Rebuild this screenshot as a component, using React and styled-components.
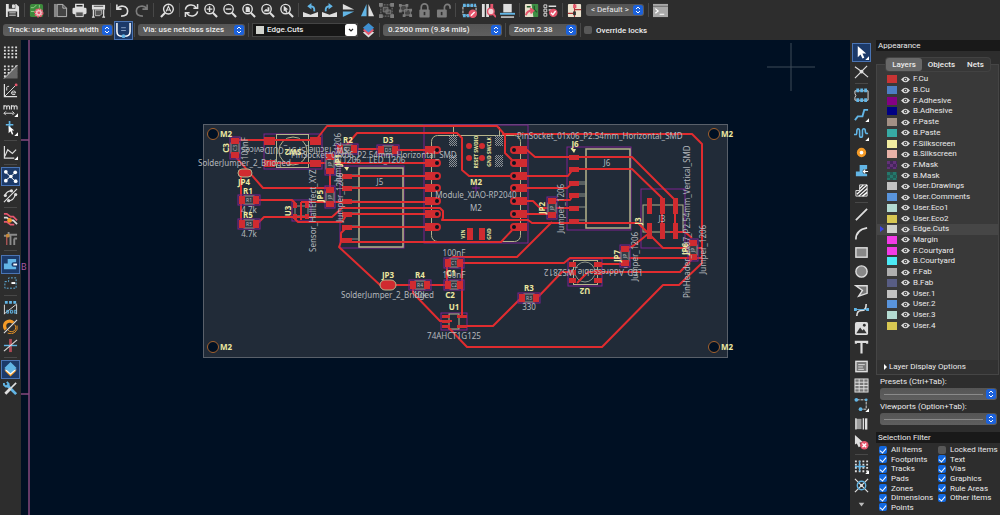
import React, { useState } from 'react';
import styled, { createGlobalStyle, css } from 'styled-components';

const GlobalStyle = createGlobalStyle`
  * {
    box-sizing: border-box;
  }
  body {
    margin: 0;
    background: #2d2d2d;
    color: #ebebeb;
    font: 8px/10px Roboto, 'Liberation Sans', sans-serif;
  }
  button, select, input {
    font: inherit;
    color: inherit;
    margin: 0;
  }
`;

const Window = styled.div`
  display: flex;
  flex-direction: column;
  min-height: 100vh;
`;

const TopBar = styled.header`
  display: flex;
  align-items: center;
  gap: 4px;
  height: 20px;
  padding-left: 5px;
`;

const OptionsBar = styled.div`
  display: flex;
  align-items: center;
  gap: 3px;
  height: 20px;
  padding-left: 3px;
  font-weight: 500;
`;

const Body = styled.div`
  flex: 1;
  display: flex;
`;

const SideBar = styled.nav`
  flex: none;
  display: flex;
  flex-direction: column;
  align-items: center;
  gap: 4px;
  width: ${(p) => (p.$wide ? 23 : 21)}px;
  padding-top: 5px;
`;

const Separator = styled.span`
  flex: none;
  background: #484848;
  ${(p) =>
    p.$row
      ? css`
          width: 13px;
          height: 1px;
          margin-bottom: ${p.$wide ? 2 : 0}px;
        `
      : css`
          width: 1px;
          height: 14px;
          margin-right: ${p.$wide ? 2 : 0}px;
        `}
`;

const ToolButton = styled.button`
  flex: none;
  display: flex;
  width: 15px;
  height: 15px;
  padding: 0;
  border: none;
  background: none;
  opacity: ${(p) => (p.disabled ? 0.45 : 1)};
  ${(p) =>
    p.$active &&
    css`
      background: #1c3a69;
      box-shadow: 0 0 0 1px #1c3a69, 0 0 0 2px #4a74b4;
    `}
  svg {
    width: 15px;
    height: 15px;
  }
`;

const Canvas = styled.main`
  flex: 1;
  min-width: 0;
  background: #001023;
  svg {
    display: block;
    width: 100%;
    height: 100%;
  }
`;

const Panel = styled.aside`
  flex: none;
  display: flex;
  flex-direction: column;
  width: 127px;
  padding-left: 3px;
`;

const PanelTitle = styled.h2`
  margin: ${(p) => (p.$spaced ? 7 : 0)}px 0 0;
  padding: 0 2px;
  background: #191919;
  font-size: 8px;
  font-weight: 400;
  line-height: 11px;
`;

const Tabs = styled.div`
  display: flex;
  align-self: center;
  margin: 7px 0 -7px;
  border-radius: 3px;
  background: #373737;
  box-shadow: 0 0 0 1px #424242;
  z-index: 1;
`;

const Tab = styled.button`
  height: 13px;
  padding: 0 6px;
  border: none;
  border-radius: 3px;
  background: ${(p) => (p.$active ? '#686868' : 'none')};
  font-weight: 500;
  line-height: 13px;
`;

const LayerBox = styled.section`
  display: flex;
  flex-direction: column;
  height: 311px;
  margin-right: 1px;
  border: 1px solid #454545;
  background: #393939;
`;

const LayerList = styled.ul`
  display: grid;
  grid-auto-rows: 1fr;
  height: 257px;
  margin: 9px 0 auto;
  padding: 0;
  list-style: none;
`;

const LayerRow = styled.li`
  display: grid;
  grid-template-columns: 10px 13px 11px 1fr;
  align-items: center;
  background: ${(p) => (p.$current ? '#464646' : 'none')};
`;

const Marker = styled.span`
  justify-self: center;
  border: 3px solid transparent;
  border-left: 4px solid ${(p) => (p.$on ? '#3c45e8' : 'transparent')};
  border-right: none;
`;

const Swatch = styled.span`
  width: ${(p) => (p.$small ? 8 : 10)}px;
  height: 8px;
  background: ${(p) => p.$color};
  ${(p) =>
    p.$checker &&
    css`
      background: repeating-conic-gradient(${p.$checker} 0 25%, ${p.$color} 0 50%) 0 0 / 6px 6px;
    `}
`;

const EyeButton = styled.button`
  display: flex;
  width: 9px;
  padding: 0;
  margin-left: 1px;
  border: none;
  background: none;
`;

const LayerName = styled.span`
  padding-left: 2px;
  line-height: 10px;
`;

const Disclosure = styled.button`
  display: flex;
  align-items: center;
  gap: 2px;
  height: 14px;
  padding: 0 7px;
  border: none;
  background: #323232;
  &::before {
    content: '';
    border: 3px solid transparent;
    border-left: 3px solid #fff;
    border-right: none;
  }
`;

const Field = styled.div`
  display: flex;
  flex-direction: column;
  gap: 1px;
  margin-top: 2px;
  padding: 0 3px 0 4px;
`;

const SelectBox = styled.span`
  flex: none;
  display: grid;
  align-items: center;
  width: ${(p) => (p.$width ? `${p.$width}px` : 'auto')};
  height: 12px;
  border-radius: 3px;
  background: linear-gradient(#555, #5f5f5f);
  & > * {
    grid-area: 1 / 1;
  }
  svg {
    justify-self: end;
    margin-right: 1px;
    width: 10px;
    height: 10px;
    pointer-events: none;
  }
`;

const Select = styled.select`
  appearance: none;
  width: 100%;
  height: 12px;
  padding: 0 12px 0 5px;
  border: none;
  background: none;
  line-height: 12px;
`;

const Rule = styled.span`
  height: 1px;
  margin: 0 14px 0 4px;
  background: #8a8a8a;
`;

const LayerSelect = styled.span`
  display: flex;
  align-items: center;
  width: 106px;
  height: 14px;
  padding-left: 3px;
  border: 1px solid #444;
  background: #161616;
  ${Select} {
    flex: 1;
    min-width: 0;
    padding: 0 3px;
  }
  svg {
    flex: none;
    width: 12px;
    height: 12px;
  }
`;

const FilterGrid = styled.div`
  display: grid;
  grid-template-columns: 59px 1fr;
  grid-template-rows: repeat(7, 1fr);
  grid-auto-flow: column;
  height: 67px;
  margin-top: 2px;
  padding-left: 3px;
`;

const CheckLabel = styled.label`
  display: flex;
  align-items: center;
  gap: 4px;
  line-height: 9px;
  white-space: nowrap;
`;

const Check = styled.input`
  appearance: none;
  flex: none;
  width: 8px;
  height: 8px;
  border-radius: 2px;
  background: #585858;
  &:checked {
    background: #1268e0;
  }
  &:checked::after {
    content: '';
    display: block;
    width: 3px;
    height: 5px;
    margin: 1px auto;
    border: solid #fff;
    border-width: 0 1px 1px 0;
    transform: rotate(40deg);
  }
`;

const W = '#dedede';
const B = '#62b5e5';
const R = '#e5566d';

const glass = (
  <>
    <circle cx="7" cy="6.5" r="5" fill="none" stroke={W} strokeWidth="1.5" />
    <path d="M10.5 10.5L15 15" stroke={W} strokeWidth="2.2" />
  </>
);

const corner = <path d="M16 12v4h-4z" fill="#fff" />;

const dots = (
  <path
    d="M1 2.5h14M1 6h14M1 9.5h14M1 13h14"
    stroke={W}
    strokeWidth="2"
    strokeDasharray="2 2"
  />
);

const glyphs = {
  save: (
    <>
      <path d="M1 1h11l3 3v11H1z" fill={W} />
      <path d="M4 1h7v5H4zM3 9h10v6H3z" fill="#333" />
      <path d="M8 2h2v3H8zM4.500 10.500h7M4.500 13h7" fill={W} stroke={W} />
    </>
  ),
  boardSetup: (
    <>
      <rect x="1" y="1" width="14" height="14" rx="2" fill="#3c8a3c" />
      <path d="M2 5h3l3-3M2 9h4M11 2v3" stroke="#9ad08a" fill="none" />
      <circle cx="10.500" cy="10.500" r="4" fill="#f2c4c8" stroke={R} strokeDasharray="2 1" strokeWidth="2" />
      <circle cx="10.500" cy="10.500" r="1.500" fill={R} />
    </>
  ),
  page: (
    <>
      <path d="M1 1h3v14H1z" fill="#888" />
      <path d="M4.500 1.500h6l4 4v9h-10z" fill="#444" stroke="#bbb" />
      <path d="M10.500 1.500v4h4" fill="none" stroke="#bbb" />
    </>
  ),
  print: (
    <>
      <path d="M4 1.500h8v3H4z" fill="none" stroke={W} strokeWidth="1.500" />
      <rect x="0.500" y="5" width="15" height="7" rx="1.500" fill={W} />
      <path d="M4 9.500h8v5H4z" fill="#555" stroke={W} />
    </>
  ),
  plot: (
    <>
      <path d="M1 2h14v5H1z" fill={W} />
      <path d="M3 3.500h10" stroke="#444" />
      <path d="M2.500 7v8M13.500 7v8M1 15h3M12 15h3" stroke={W} strokeWidth="1.300" />
      <path d="M4.500 7.500h7v4l-2 2h-5z" fill="#555" stroke="#bbb" />
    </>
  ),
  undo: <path d="M2 1.500v5h5M2.500 6C5 2 13 2.500 13.500 8.500c0 4-3.500 5.500-7 5.500" fill="none" stroke={W} strokeWidth="1.700" />,
  redo: <path d="M14 1.500v5H9M13.500 6C11 2 3 2.500 2.500 8.500c0 4 3.500 5.500 7 5.500" fill="none" stroke={W} strokeWidth="1.700" />,
  find: (
    <>
      <circle cx="9" cy="6.500" r="5.200" fill="none" stroke={W} strokeWidth="1.500" />
      <path d="M5.500 10.500L1 15" stroke={W} strokeWidth="2.200" />
      <path d="M6.500 9L9 3.500L11.500 9M7.500 7.500h3" fill="none" stroke={W} strokeWidth="1.200" />
    </>
  ),
  refresh: (
    <path
      d="M1.500 7C2.500 1.500 10 .5 13 5M14.500 1v4.500H10M14.500 9C13.500 14.500 6 15.500 3 11M1.500 15v-4.500H6"
      fill="none"
      stroke={W}
      strokeWidth="1.600"
    />
  ),
  zoomIn: <>{glass}<path d="M4 6.500h6M7 3.500v6" stroke={W} strokeWidth="1.500" /></>,
  zoomOut: <>{glass}<path d="M4 6.500h6" stroke={W} strokeWidth="1.500" /></>,
  zoomFit: <>{glass}<path d="M5 4h3l1.500 1.500V9.500H5z" fill={W} /></>,
  zoomObjects: <>{glass}<path d="M3.500 9l3-3l1.500 1.500V4.500h2V9z" fill={W} /></>,
  zoomSelection: <>{glass}<path d="M5 3l5 4H8l1 3l-1.500.500L6.500 8L5 9z" fill={W} /></>,
  rotateLeft: (
    <>
      <path d="M0 9.500l8 3l8-3V15H0z" fill={W} />
      <path d="M12 9C12.500 5 11 3.500 8 3.500" fill="none" stroke={B} strokeWidth="2" />
      <path d="M9 0v7L4.500 3.500z" fill={B} />
    </>
  ),
  rotateRight: (
    <>
      <path d="M0 9.500l8 3l8-3V15H0z" fill={W} />
      <path d="M4 9C3.500 5 5 3.500 8 3.500" fill="none" stroke={B} strokeWidth="2" />
      <path d="M7 0v7L11.500 3.500z" fill={B} />
    </>
  ),
  flipV: (
    <>
      <path d="M2 1v6h12z" fill={W} />
      <path d="M2 15V9h12z" fill={B} />
    </>
  ),
  flipH: (
    <>
      <path d="M1 14h6V1z" fill={B} />
      <path d="M15 14H9V1z" fill={W} />
    </>
  ),
  group: (
    <>
      <rect x="2" y="2" width="12" height="12" fill="none" stroke={W} strokeDasharray="2 1" />
      <path d="M0 0h4v4H0zM12 0h4v4h-4zM0 12h4v4H0zM12 12h4v4h-4z" fill={W} />
      <path d="M4.500 4.500h5v5h-5zM7.500 7.500h5v4h-5z" fill="#777" stroke={W} />
    </>
  ),
  ungroup: (
    <>
      <path d="M2.500 2.500h7v6h-7zM7 7h6.500v6H7z" fill="#666" stroke={W} />
      <path d="M1 1h3v3H1zM8 1h3v3H8zM1 7h3v3H1zM12 6h3v3h-3zM12 12h3v3h-3zM5 12h3v3H5z" fill={W} />
    </>
  ),
  lock: (
    <>
      <path d="M4.500 8V4.500a3.500 3.500 0 0 1 7 0V8" fill="none" stroke={W} strokeWidth="1.800" />
      <rect x="2.500" y="7" width="11" height="8.500" rx="1" fill={W} />
      <path d="M8 9.500v3.500" stroke="#333" strokeWidth="1.800" />
    </>
  ),
  unlock: (
    <>
      <path d="M9 8V4.500a3 3 0 0 1 6 0V6" fill="none" stroke={W} strokeWidth="1.800" />
      <rect x="1" y="7" width="10.500" height="8.500" rx="1" fill={W} />
      <path d="M6 9.500v3.500" stroke="#333" strokeWidth="1.800" />
    </>
  ),
  footprintEditor: (
    <>
      <rect x="1" y="3" width="14" height="10" fill="none" stroke={W} strokeDasharray="3 1" />
      <path d="M1 2.500h14M1 13.500h8" stroke={B} strokeWidth="3.500" strokeDasharray="3 1" />
      <circle cx="11.500" cy="11.500" r="4.500" fill={R} />
      <path d="M9.500 13.500l4-4" stroke="#fff" strokeWidth="1.500" />
    </>
  ),
  footprintBrowser: (
    <>
      <path d="M1 1h3v14H1zM5.500 1h3v14h-3z" fill={W} />
      <path d="M10 1h3v5h-3z" fill={R} />
      <circle cx="10.500" cy="9" r="3.500" fill="#f4d6da" stroke={R} strokeWidth="1.500" />
      <path d="M13 11.500l3 3.500" stroke={R} strokeWidth="2" />
    </>
  ),
  updateFromLibrary: (
    <>
      <path d="M3.500 1h9v9h-9z" fill={W} />
      <path d="M0 11.500h16" stroke={B} strokeWidth="2" />
      <path d="M1 15h14" stroke={W} strokeWidth="1.500" />
    </>
  ),
  updateBoard: (
    <>
      <rect x="1" y="1" width="14" height="14" rx="1" fill="#e8e0cc" />
      <path d="M8 1h7v14h-5z" fill="#3f8f45" />
      <path d="M3 4h4M11 3v4l3 3" stroke="#235c2a" fill="none" strokeWidth="1.500" />
      <path d="M2 13c1-4 3-5 7-5M6.500 5.500L10 8l-3 3" stroke={R} fill="none" strokeWidth="2" />
    </>
  ),
  drc: (
    <>
      <path d="M1 2h3v3H1zM1 6.500h3v3H1zM1 11h3v3H1z" fill="none" stroke={W} />
      <path d="M6 3.500h8M6 7.500h4" stroke={W} strokeWidth="1.500" />
      <circle cx="11" cy="10.500" r="4.500" fill={R} />
      <path d="M8.500 10.500l2 2l3-4" fill="none" stroke="#fff" strokeWidth="1.500" />
    </>
  ),
  schematic: (
    <>
      <rect x="1" y="1" width="14" height="14" rx="1" fill="#ece3cf" />
      <path d="M8 1v14M1 11h7M8 7h7" fill="none" stroke="#a33" strokeWidth="1.200" />
      <path d="M6.500 1.500h3.500v4H6.500z" fill={R} />
      <path d="M6.500 9h3v4h-3z" fill="#333" />
    </>
  ),
  terminal: (
    <>
      <rect x="0" y="1" width="16" height="14" fill="#a9a9a9" />
      <path d="M0 3.500h16" stroke="#666" />
      <path d="M2.500 6l3 2.500l-3 2.500M7 12h5" fill="none" stroke="#fff" strokeWidth="1.300" />
    </>
  ),
  trackAuto: (
    <>
      <path d="M1 0v9q0 5 5 5h4q5 0 5-5V0" fill="none" stroke="#fff" strokeWidth="1.600" />
      <path d="M5.500 5h5M5.500 8h5" stroke="#8aa3c8" />
      <circle cx="8" cy="14" r="2" fill={B} />
    </>
  ),
  layerPair: (
    <>
      <path d="M2 10l6 5.500L14 10L8 7z" fill={W} />
      <path d="M2 7.500L8 13l6-5.500L8 4z" fill={R} />
      <path d="M2 5l6 5l6-5l-6-5z" fill="#3f8fd0" />
    </>
  ),
  grid: dots,
  gridOverride: (
    <>
      {dots}
      <path d="M15.500 1v14.500H1z" fill="#686868" />
      <path d="M15.500 1L1 15.500" stroke={W} />
    </>
  ),
  polar: (
    <>
      <path d="M1.500 1v13.500H15" fill="none" stroke={W} strokeWidth="1.300" />
      <path d="M2 14L14 2" stroke={W} />
      <circle cx="14" cy="2" r="1.500" fill={R} />
      <path d="M4 8V4.500q0-1 2.500-1M9 10.500h4.500q0-2-2.200-2t-2.300 2.300t4 1.500" fill="none" stroke={W} />
    </>
  ),
  units: (
    <>
      <path d="M1 8V3.500M1 5q2-2 3 0v3M4 5q2-2 3 0v3M9 8V3.500M9 5q2-2 3 0v3M12 5q2-2 3 0v3" fill="none" stroke={W} strokeWidth="1.200" />
      <path d="M1 12h10M3 10l-2 2l2 2M10 10l2 2l-2 2" fill="none" stroke={W} />
      {corner}
    </>
  ),
  cursorShape: (
    <>
      <path d="M7 0v8M3 4h8" stroke={B} strokeWidth="1.800" />
      <path d="M6 5l6 5H9.500l1.500 4l-1.500.500L8 11l-2 2z" fill="#fff" />
      {corner}
    </>
  ),
  angle: (
    <>
      <path d="M1.500 1v13H12" fill="none" stroke={W} strokeWidth="1.300" />
      <path d="M2 12l3-7l5 4l4-4" fill="none" stroke={W} strokeWidth="1.200" />
      {corner}
    </>
  ),
  ratsnest: (
    <>
      <path d="M2.500 3L13 13M2.500 12.500L8 8l5-4" stroke="#fff" />
      <circle cx="3" cy="3" r="2" fill="#fff" />
      <circle cx="13" cy="3.500" r="2" fill="#fff" />
      <circle cx="3" cy="12.500" r="2" fill="#fff" />
      <circle cx="8.500" cy="8" r="1.800" fill="#fff" />
      <circle cx="13.500" cy="13" r="2" fill="#fff" />
    </>
  ),
  curvedRatsnest: (
    <>
      <path d="M2 8q2-5 7-5M5 14q7-1 8-7M1 15L15 1" fill="none" stroke={W} strokeWidth="1.200" />
      <circle cx="2.500" cy="8" r="1.700" fill={W} />
      <circle cx="9" cy="3" r="1.700" fill={W} />
      <circle cx="13.500" cy="7" r="1.700" fill={W} />
      <circle cx="6" cy="13.500" r="1.700" fill={W} />
    </>
  ),
  highContrast: (
    <>
      <path d="M1 2h3l4 3h3l4 4" fill="none" stroke={R} strokeWidth="1.800" />
      <path d="M1 6h3l4 3h3l4 4" fill="none" stroke={W} strokeWidth="1.800" />
      <path d="M1 10.500h3l4 3h4" fill="none" stroke={R} strokeWidth="1.800" />
      <circle cx="7" cy="9" r="2.500" fill="#f39a27" />
    </>
  ),
  netColors: (
    <>
      <path d="M1 5h7v10M6 1v3h9M12 8v7M15 8h-3" fill="none" stroke="#8b8b8b" strokeWidth="2" />
      <path d="M4 5v10" stroke="#a55" strokeWidth="1.500" />
      <circle cx="5" cy="5" r="2" fill="#c58a3a" />
    </>
  ),
  zoneFill: (
    <>
      <path d="M5 2h9v3.500a3 3 0 0 0 0 5V13H1V7h4z" fill={B} />
      <path d="M16 5.500h-4.500a2 2 0 0 0 0 5H16z" fill="#1c3a69" />
      <path d="M11 8h4" stroke="#fff" strokeWidth="2" />
    </>
  ),
  zoneOutline: (
    <>
      <path d="M2 6h4V2h8v11H2z" fill="none" stroke={B} strokeDasharray="2 1.500" />
      <path d="M9 7.500h4" stroke="#fff" strokeWidth="2" />
    </>
  ),
  padOutline: (
    <>
      <path d="M2 2.500h13" stroke={B} strokeWidth="3" strokeDasharray="3 1.500" />
      <path d="M1.500 5v10M14.500 5v10M1 15L15 4" stroke={W} />
      <path d="M4 11h2v3H4zM8 11h2v3H8zM12 11h2v3h-2z" fill="none" stroke={B} />
    </>
  ),
  viaOutline: (
    <>
      <path d="M3 11a5 5 0 0 1 8-7" fill="none" stroke="#f39a27" strokeWidth="3.500" />
      <path d="M5.500 12a4.500 4.500 0 0 0 7-6M5 15a7 7 0 0 0 10-8" fill="none" stroke="#f39a27" />
      <path d="M1 15L15 1" stroke={W} strokeWidth="1.200" />
    </>
  ),
  trackOutline: (
    <>
      <path d="M8 1v14" stroke="#b04a55" strokeWidth="3" />
      <path d="M1 8h14" stroke={B} strokeWidth="1.500" />
      <path d="M1 14L15 2" stroke={W} strokeWidth="1.200" />
    </>
  ),
  layers: (
    <>
      <path d="M1.500 9L8 15.500L14.500 9z" fill="#f39a27" />
      <path d="M1.500 8L8 13.500L14.500 8z" fill="#fff" />
      <path d="M1.500 6.500L8 12l6.500-5.500L8 0z" fill={B} />
    </>
  ),
  properties: (
    <>
      <path d="M4 4l10 10" stroke={B} strokeWidth="3" />
      <path d="M1 2v2l2 2h2l1-1V3L4 1" fill="none" stroke={B} strokeWidth="2" />
      <path d="M14 2L8 8" stroke={W} strokeWidth="1.800" />
      <path d="M8 8l-5.500 5.500" stroke={W} strokeWidth="3" />
    </>
  ),
  select: <><path d="M4 1l9 8H9l2 4.500l-2 1L7 10l-3 3z" fill="#fff" />{corner}</>,
  localRatsnest: (
    <>
      <path d="M1 3l7 5l6-6M1 15l7-7l7 6" fill="none" stroke={W} strokeWidth="1.200" />
      <circle cx="8" cy="8" r="2" fill={W} />
    </>
  ),
  footprint: (
    <>
      <path d="M1 3h14v10H1v-3q2-2 0-4z" fill="none" stroke={W} />
      <path d="M2.500 2.500h11.500M2.500 13h11.500" stroke={B} strokeWidth="4" strokeDasharray="3 1.200" />
    </>
  ),
  route: <><path d="M1 14l3-4h5l2-7h4" fill="none" stroke={B} strokeWidth="2" />{corner}</>,
  tune: (
    <>
      <path d="M0 9h2q1 0 1-3t1.500-3T6 6v4q0 2 1.500 2T9 10V5q0-2 1.500-2T12 5t1 3h2" fill="none" stroke={B} strokeWidth="1.700" />
      {corner}
    </>
  ),
  via: <circle cx="8" cy="8" r="3.500" fill="#fff" stroke="#f39a27" strokeWidth="3" />,
  zone: (
    <>
      <path d="M6 1h8v4.500a3 3 0 0 0 0 5V13H2V8h4z" fill={B} />
      <path d="M16 5.500h-4.500a2 2 0 0 0 0 5H16z" fill="#2d2d2d" />
      <path d="M10 8h5M12 6l-2 2l2 2" fill="none" stroke="#fff" strokeWidth="1.300" />
    </>
  ),
  ruleArea: (
    <>
      <path d="M6 2h8v12H2V8h4z" fill="#3a3a3a" stroke={W} />
      <path d="M6 6l4-4M3 12L14 2M5 14l9-8M9 14l5-4" stroke="#fff" strokeWidth="1.400" />
    </>
  ),
  line: <path d="M2 14L14 2" stroke={W} strokeWidth="1.800" />,
  arc: <path d="M2 14.500Q2 4 14 2" fill="none" stroke={W} strokeWidth="1.800" />,
  rect: <rect x="2" y="3" width="12" height="10" fill="#888" stroke={W} strokeWidth="1.500" />,
  circle: <circle cx="8" cy="8" r="6" fill="#888" stroke={W} strokeWidth="1.500" />,
  polygon: <path d="M2 3h12v8l-9 3l4-6z" fill="#777" stroke={W} strokeWidth="1.500" />,
  bezier: (
    <>
      <path d="M3 15q0-6 5-6t5-7" fill="none" stroke={W} strokeWidth="1.700" />
      <path d="M1 8h14" stroke={B} />
      <path d="M0 6.500h3v3H0zM13 6.500h3v3h-3z" fill={B} />
    </>
  ),
  image: (
    <>
      <rect x="1" y="1" width="14" height="14" rx="2" fill={W} />
      <path d="M2.500 13l4-6l2.500 3l1.500-1.500L13.500 13z" fill="#333" />
      <circle cx="11" cy="4.500" r="1.500" fill="#333" />
    </>
  ),
  text: <path d="M2 4V2h12v2M8 2v12.500" fill="none" stroke={W} strokeWidth="2.300" />,
  textBox: (
    <>
      <rect x="2" y="2.500" width="12" height="11" fill="#777" stroke={W} strokeWidth="1.500" />
      <path d="M4.500 6h7M4.500 8.500h5M4.500 11h6" stroke={W} />
    </>
  ),
  table: (
    <>
      <rect x="1" y="1" width="14" height="14" fill="#777" stroke={W} />
      <path d="M1 4.500h14M1 8h14M1 11.500h14M5.500 1v14M10.500 1v14" stroke={W} />
    </>
  ),
  dimension: (
    <>
      <path d="M3 3h10v10H7" fill="none" stroke={W} strokeDasharray="3 1" />
      <circle cx="2.500" cy="3" r="2" fill={B} />
      <circle cx="13" cy="3" r="1.500" fill={B} />
      <circle cx="7" cy="13" r="2" fill={B} />
      {corner}
    </>
  ),
  barcode: (
    <>
      <path d="M2 3h6v11H2z" fill="#9a9a9a" />
      <path d="M2 2.500v12M10 2.500v12" stroke={W} strokeWidth="1.500" />
      <path d="M13 2.500v12" stroke={W} strokeWidth="2.500" />
    </>
  ),
  remove: (
    <>
      <path d="M1 0l9 8H6l1 4l-2 1l-2-4l-2 1z" fill={W} />
      <circle cx="11" cy="11" r="4.500" fill={R} />
      <path d="M9 9l4 4M13 9l-4 4" stroke="#fff" strokeWidth="1.500" />
    </>
  ),
  gridOrigin: <>{dots}<path d="M6 2v11M1 8h11" stroke={B} strokeWidth="1.500" />{corner}</>,
  measureOrigin: (
    <>
      <path d="M1 1l14 14M15 1L1 15" stroke={W} strokeWidth="1.300" />
      <circle cx="8" cy="8" r="4.500" fill="none" stroke={B} strokeWidth="1.500" />
      <circle cx="8" cy="8" r="1.500" fill={W} />
    </>
  ),
  more: <path d="M5 6h6l-3 4z" fill="#bbb" />,
};

const Tool = ({ name, active, disabled }) => (
  <ToolButton type="button" aria-label={name} $active={active} disabled={disabled}>
    <svg viewBox="0 0 16 16" aria-hidden="true">{glyphs[name]}</svg>
  </ToolButton>
);

// '|' is a separator, '||' a slightly wider one, a leading '*' an active tool, '-' a disabled one
const ToolSet = ({ items, row }) =>
  items.map((item, i) =>
    item[0] === '|' ? (
      <Separator key={i} $row={row} $wide={item === '||'} />
    ) : (
      <Tool key={i} name={item.replace(/^[*-]/, '')} active={item[0] === '*'} disabled={item[0] === '-'} />
    ),
  );

const mainTools = [
  'save', '|', 'boardSetup', '|', 'page', 'print', 'plot', '|', 'undo', '-redo', '||',
  'find', '|', 'refresh', 'zoomIn', 'zoomOut', 'zoomFit', 'zoomObjects', 'zoomSelection', '|',
  'rotateLeft', 'rotateRight', 'flipV', 'flipH', '-group', '-ungroup', '-lock', '-unlock', '||',
  'footprintEditor', 'footprintBrowser', 'updateFromLibrary', '|', 'updateBoard', 'drc', '|', 'schematic',
];

const leftTools = [
  'grid', 'gridOverride', 'polar', 'units', 'cursorShape', '|', 'angle', '|', '*ratsnest',
  'curvedRatsnest', '|', 'highContrast', 'netColors', '||', '*zoneFill', 'zoneOutline', '|',
  'padOutline', 'viaOutline', 'trackOutline', '|', '*layers', 'properties',
];

const rightTools = [
  '*select', 'localRatsnest', '|', 'footprint', 'route', 'tune', 'via', 'zone', 'ruleArea', '|',
  'line', 'arc', 'rect', 'circle', 'polygon', 'bezier', 'image', 'text', 'textBox', 'table',
  'dimension', 'barcode', 'remove', '|', 'gridOrigin', 'measureOrigin', 'more',
];

const Stepper = () => (
  <svg viewBox="0 0 10 10" aria-hidden="true">
    <rect width="10" height="10" rx="2.500" fill="#1c62dc" />
    <path d="M3 4l2-2l2 2M3 6l2 2l2-2" fill="none" stroke="#fff" />
  </svg>
);

const Dropdown = ({ label, value, width, id }) => (
  <SelectBox $width={width}>
    <Select id={id} aria-label={label}>
      <option>{value}</option>
    </Select>
    {!value && <Rule />}
    <Stepper />
  </SelectBox>
);

const layers = [
  ['F.Cu', '#c83434'],
  ['B.Cu', '#4d7fc4'],
  ['F.Adhesive', '#840084'],
  ['B.Adhesive', '#000084'],
  ['F.Paste', '#a39085'],
  ['B.Paste', '#37aaa5'],
  ['F.Silkscreen', '#f2eda1'],
  ['B.Silkscreen', '#e8b2a7'],
  ['F.Mask', '#633178', '#43255a'],
  ['B.Mask', '#24786c', '#245a54'],
  ['User.Drawings', '#c2c2c2'],
  ['User.Comments', '#5994dc'],
  ['User.Eco1', '#b4dbd2'],
  ['User.Eco2', '#d8c852'],
  ['Edge.Cuts', '#d0d2cd'],
  ['Margin', '#f33be6'],
  ['F.Courtyard', '#f33be6'],
  ['B.Courtyard', '#4ce9f5'],
  ['F.Fab', '#afafaf'],
  ['B.Fab', '#585d84'],
  ['User.1', '#c2c2c2'],
  ['User.2', '#5994dc'],
  ['User.3', '#b4dbd2'],
  ['User.4', '#d8c852'],
];

const filters = [
  'All items', 'Footprints', 'Tracks', 'Pads', 'Zones', 'Dimensions', 'Points',
  'Locked items', 'Text', 'Vias', 'Graphics', 'Rule Areas', 'Other items',
];

const SILK = '#ece8a0';
const FAB = '#b4b8bd';
const COURT = '#7d2390';
const PAD = '#d02b30';
const TRACK = '#e02c2f';

const Label = styled.text`
  font-family: 'Noto Sans', sans-serif;
  font-size: ${(p) => (p.$tiny ? 5 : 8)}px;
  font-weight: ${(p) => (p.$silk ? 700 : 400)};
  fill: ${(p) => (p.$silk ? SILK : FAB)};
  text-anchor: ${(p) => p.$anchor || 'middle'};
`;

const labels = [
  { t: 'SolderJumper_2_Bridged', x: 198, y: 166, a: 'start' },
  { t: 'PinSocket_01x06_P2.54mm_Horizontal_SMD', x: 291, y: 158, a: 'start' },
  { t: 'PinSocket_01x06_P2.54mm_Horizontal_SMD', x: 517, y: 139, a: 'start' },
  { t: 'R_1206', x: 334, y: 163, a: 'start' },
  { t: 'LED_1206', x: 369, y: 163, a: 'start' },
  { t: 'SW_Tactile_SPST_CUIDevices', x: 348, y: 147, r: 180, a: 'start' },
  { t: '100nF', x: 248, y: 160, r: -90, a: 'start' },
  { t: '4.7k', x: 249, y: 213 },
  { t: '4.7k', x: 249, y: 237 },
  { t: 'Sensor_HallEffect_XYZ', x: 316, y: 252, r: -90, a: 'start' },
  { t: 'Jumper_1206', x: 343, y: 222, r: -90, a: 'start' },
  { t: 'Jumper_1206', x: 341, y: 182, r: -90, a: 'start' },
  { t: 'Jumper_1206', x: 564, y: 233, r: -90, a: 'start' },
  { t: 'Jumper_1206', x: 638, y: 281, r: -90, a: 'start' },
  { t: 'Jumper_1206', x: 706, y: 274, r: -90, a: 'start' },
  { t: 'PinHeader_2x07_P2.54mm_Vertical_SMD', x: 690, y: 298, r: -90, a: 'start' },
  { t: 'J5', x: 380, y: 185 },
  { t: 'J6', x: 607, y: 166 },
  { t: 'J3', x: 662, y: 222 },
  { t: 'Module_XIAO-RP2040', x: 476, y: 198 },
  { t: 'M2', x: 476, y: 211 },
  { t: '100nF', x: 454, y: 256 },
  { t: '100nF', x: 454, y: 278 },
  { t: 'SolderJumper_2_Bridged', x: 341, y: 298, a: 'start' },
  { t: '10k', x: 420, y: 298 },
  { t: '74AHCT1G125', x: 454, y: 339 },
  { t: '330', x: 529, y: 310 },
  { t: 'LED_Addressable_WS2812', x: 642, y: 269, r: 180, a: 'start' },
];

const silkLabels = [
  { t: 'M2', x: 226, y: 137 },
  { t: 'M2', x: 727, y: 137 },
  { t: 'M2', x: 226, y: 350 },
  { t: 'M2', x: 727, y: 350 },
  { t: 'M2', x: 476, y: 185 },
  { t: 'C3', x: 229, y: 148, r: -90 },
  { t: 'JP4', x: 244, y: 185 },
  { t: 'R1', x: 248, y: 194 },
  { t: 'R5', x: 248, y: 218 },
  { t: 'U3', x: 291, y: 211, r: -90 },
  { t: 'JP5', x: 323, y: 196, r: -90 },
  { t: 'JP1', x: 341, y: 160, r: -90 },
  { t: 'SW2', x: 293, y: 149, r: 180 },
  { t: 'R2', x: 348, y: 143 },
  { t: 'D3', x: 388, y: 143 },
  { t: 'J6', x: 575, y: 147 },
  { t: 'JP2', x: 545, y: 208, r: -90 },
  { t: 'J3', x: 641, y: 221, r: -90 },
  { t: 'JP7', x: 620, y: 256, r: -90 },
  { t: 'JP6', x: 688, y: 249, r: -90 },
  { t: 'JP3', x: 388, y: 278 },
  { t: 'R4', x: 420, y: 278 },
  { t: 'C1', x: 451, y: 276 },
  { t: 'C2', x: 450, y: 298 },
  { t: 'U1', x: 454, y: 310 },
  { t: 'R3', x: 529, y: 291 },
  { t: 'U2', x: 585, y: 288, r: 180 },
];

const tinyLabels = [
  { t: 'RESET SWDIO', x: 478, y: 152, r: -90 },
  { t: 'GND SWCLK', x: 491, y: 152, r: -90 },
  { t: 'VIN', x: 465, y: 234, r: -90 },
  { t: 'GND', x: 491, y: 234, r: -90 },
];

const turn = ({ x, y, r }) => (r ? `rotate(${r} ${x} ${y})` : undefined);

const tracks = [
  'M235 140H316L327 126H497L505 135V153L515 163',
  'M502 134H692L702 144V263L679 285H663L602 347H467L448 327',
  'M268 163H435',
  'M235 156L263 188H330',
  'M241 173V223',
  'M257 200H292L295 203V208',
  'M257 224L264 217H332L342 208H440L443 211V218L442 220H528L532 223H638L663 248H702',
  'M295 214V219L298 222H342L347 214H437',
  'M301 202H437M301 202V220',
  'M330 156V206',
  'M345 147L357 133H457L462 138V170L469 176H515',
  'M358 149H378M398 150H435',
  'M347 176H435M347 188H435M347 227H435',
  'M347 227L341 233V242L339 247L380 285H388',
  'M347 242H501L515 227',
  'M515 150H527L535 157H632L675 200V232',
  'M515 176H568L573 169H632L662 198V232',
  'M515 188H567L573 183',
  'M515 201H533L540 208H573',
  'M515 214H552M552 200H570L573 195',
  'M448 263V260L453 257H517L552 222',
  'M460 263H564L570 258H702',
  'M447 263V285M462 263V316M393 285H412M428 285H445',
  'M413 285V293L440 321H452',
  'M462 326H493L521 298',
  'M538 297L562 272H575M577 283L588 272H680L693 258',
  'M598 264H623M628 248L633 246L648 234',
  'M670 232H685L692 238',
];

const Chip = ({ x, y, r, id, size = 8 }) => (
  <g transform={`translate(${x} ${y}) rotate(${r ? -90 : 0})`}>
    <rect x={-size - 3} y="-5" width={size * 2 + 6} height="10" fill="none" stroke={COURT} />
    <rect x={3 - size} y="-4" width={size * 2 - 6} height="8" fill="#343b45" stroke="#8d9388" />
    <rect x={-size - 2} y="-4" width="6" height="8" fill={PAD} />
    <rect x={size - 4} y="-4" width="6" height="8" fill={PAD} />
    <Label $tiny x="0" y="2">{id}</Label>
  </g>
);

const chips = [
  [249, 200, 'R1'], [249, 224, 'R5'], [347, 149, 'R2'], [388, 150, 'D3'], [420, 285, 'R4'], [529, 298, 'R3'],
];

const uprights = [
  [235, 148, 'C3'], [330, 164, 'JP'], [330, 197, 'JP'], [552, 208, 'JP'], [625, 256, 'JP'], [693, 250, 'JP'],
];

const pinRows = [150, 163, 176, 188, 201, 214, 227];

const Board = () => (
  <svg viewBox="21 40 829 475" preserveAspectRatio="xMidYMid slice" role="img" aria-label="Board layout">
    <defs>
      <pattern id="hatch" width="2" height="2" patternUnits="userSpaceOnUse">
        <path d="M0 2L2 0" stroke="#8a8f94" />
      </pattern>
    </defs>
    <path d="M29 40V515M21 140H29M21 394H29" stroke="#85487f" strokeWidth="1.500" />
    <text x="21" y="270" fontSize="9" fontFamily="Roboto, sans-serif" fill="#a9589f">B</text>
    <path d="M767 67H815M791 43V91" stroke="#3d4a59" />
    <rect x="203.500" y="124.500" width="524" height="233" fill="#212b38" stroke="#59606a" />

    <g fill="none" stroke={COURT}>
      <rect x="424" y="125" width="104" height="118" />
      <rect x="340" y="166" width="64" height="82" />
      <rect x="567" y="147" width="64" height="83" />
      <rect x="641" y="189" width="44" height="59" />
      <rect x="264" y="134" width="58" height="35" />
      <rect x="292" y="200" width="19" height="21" />
      <rect x="441" y="313" width="26" height="17" />
      <rect x="568" y="259" width="34" height="27" />
      <path d="M476 184v8M472 188h8" />
    </g>
    <g fill="none" stroke="#b5b48b">
      <path d="M453.500 127V135M499.500 127V135" />
      <rect x="431.500" y="135.500" width="89" height="106" rx="6" />
      <rect x="359" y="168" width="44" height="79" strokeWidth="1.500" />
      <rect x="586" y="149" width="44" height="79" strokeWidth="1.500" />
      <rect x="643" y="205" width="40" height="27" />
      <rect x="276.500" y="134.500" width="32" height="33" />
      <circle cx="293" cy="151" r="14" />
      <rect x="573.500" y="260.500" width="24" height="24" />
      <circle cx="585" cy="272" r="10" stroke="#8d9388" />
      <rect x="295" y="206" width="13" height="10" stroke="#8d9388" />
      <rect x="449" y="314" width="10" height="15" />
      <path d="M351 175h8M351 187h8M351 201h8M351 213h8M351 226h8M351 239h8" stroke="#8d9388" />
      <path d="M579 182h8M579 184h8M579 194h8M579 196h8M579 207h8M579 220h8" stroke="#8d9388" />
    </g>
    <g fill="url(#hatch)">
      <rect x="449" y="135" width="8" height="11" />
      <rect x="495" y="135" width="8" height="11" />
      <rect x="449" y="155" width="8" height="12" />
      <rect x="495" y="155" width="8" height="12" />
    </g>

    <path d={tracks.join('')} fill="none" stroke={TRACK} strokeWidth="2" strokeLinejoin="round" />

    <g fill={PAD}>
      {pinRows.map((y) => (
        <g key={y}>
          <rect x="425" y={y - 4} width="12" height="8" />
          <rect x="515" y={y - 4} width="12" height="8" />
          <circle cx="437" cy={y} r="4" />
          <circle cx="514" cy={y} r="4" />
          <circle cx="437" cy={y} r="2" fill="#0b1420" />
          <circle cx="514" cy={y} r="2" fill="#0b1420" />
        </g>
      ))}
      {[176, 188, 201, 214, 227, 240].map((y) => (
        <rect key={y} x="342" y={y - 2} width="10" height="5" />
      ))}
      {[157, 169, 183, 195, 208, 221].map((y) => (
        <rect key={y} x="569" y={y - 2} width="10" height="5" />
      ))}
      {[649, 662, 675].map((x) => (
        <path key={x} d={`M${x - 2} 198h5v16h-5zM${x - 2} 223h5v16h-5z`} />
      ))}
      <path d="M264 137h11v8h-11zM264 160h11v7h-11zM310 137h11v8h-11zM310 160h11v7h-11z" />
      <path d="M467 228h6v12h-6zM479 228h6v12h-6z" />
      <circle cx="469" cy="146" r="3" />
      <circle cx="482" cy="146" r="3" />
      <circle cx="469" cy="158" r="3" />
      <circle cx="482" cy="158" r="3" />
      <path d="M569 262h7v5h-7zM569 270h7v5h-7zM569 278h7v5h-7zM594 262h8v5h-8zM594 270h8v5h-8zM594 278h8v5h-8z" />
      <path d="M442 315h8v3h-8zM442 320h8v3h-8zM442 325h8v3h-8zM457 315h10v3h-10zM457 325h10v3h-10z" />
      <path d="M293 203h4v5h-4zM305 203h4v5h-4zM293 214h4v5h-4zM305 214h4v5h-4z" />
      <rect x="238" y="169" width="14" height="8" rx="4" stroke="#b5b48b" />
      <rect x="380" y="280" width="16" height="10" rx="5" stroke="#b5b48b" />
    </g>
    {chips.map(([x, y, id]) => (
      <Chip key={id} x={x} y={y} id={id} />
    ))}
    <Chip x={454} y={263} id="C1" size={7} />
    <Chip x={454} y={285} id="C2" size={7} />
    {uprights.map(([x, y, id]) => (
      <Chip key={`${x}-${y}`} x={x} y={y} id={id} r />
    ))}

    <g fill="#001023" stroke="#a3622e">
      <circle cx="213" cy="134" r="5.500" />
      <circle cx="714" cy="134" r="5.500" />
      <circle cx="213" cy="347" r="5.500" />
      <circle cx="714" cy="347" r="5.500" />
    </g>
    <path d="M571 149h5l-2 4zM344 167h5l-2 4z" fill={SILK} />
    {labels.map((l, i) => (
      <Label key={i} x={l.x} y={l.y} $anchor={l.a} transform={turn(l)}>{l.t}</Label>
    ))}
    {silkLabels.map((l, i) => (
      <Label key={i} $silk x={l.x} y={l.y} transform={turn(l)}>{l.t}</Label>
    ))}
    {tinyLabels.map((l, i) => (
      <Label key={i} $silk $tiny x={l.x} y={l.y} transform={turn(l)}>{l.t}</Label>
    ))}
  </svg>
);

const Eye = () => (
  <svg width="9" height="7" viewBox="0 0 9 7" aria-hidden="true">
    <path d="M0 3.500Q4.500-2 9 3.500Q4.500 9 0 3.500z" fill="#dcdcdc" />
    <circle cx="4.500" cy="3.500" r="1.700" fill="#393939" />
    <circle cx="4.500" cy="3.500" r="0.800" fill="#dcdcdc" />
  </svg>
);

const App = () => {
  const [tab, setTab] = useState('Layers');

  return (
    <Window>
      <GlobalStyle />
      <TopBar>
        <ToolSet items={mainTools} />
        <Dropdown label="Layer preset" value="< Default >" width={58} />
        <Separator />
        <Tool name="terminal" />
      </TopBar>
      <OptionsBar>
        <Dropdown label="Track width" value="Track: use netclass width" width={110} />
        <Tool name="trackAuto" active />
        <Separator />
        <Dropdown label="Via size" value="Via: use netclass sizes" width={107} />
        <Separator />
        <LayerSelect>
          <Swatch $small $color="#d0d2cd" />
          <Select aria-label="Active layer">
            <option>Edge.Cuts</option>
          </Select>
          <svg viewBox="0 0 12 12" aria-hidden="true">
            <rect width="12" height="12" rx="2.500" fill="#fff" />
            <path d="M4 5l2 2l2-2" fill="none" stroke="#222" strokeWidth="1.200" />
          </svg>
        </LayerSelect>
        <Tool name="layerPair" />
        <Separator />
        <Dropdown label="Grid" value="0.2500 mm (9.84 mils)" width={119} />
        <Separator />
        <Dropdown label="Zoom" value="Zoom 2.38" width={68} />
        <Separator />
        <CheckLabel>
          <Check type="checkbox" />
          Override locks
        </CheckLabel>
      </OptionsBar>
      <Body>
        <SideBar>
          <ToolSet items={leftTools} row />
        </SideBar>
        <Canvas>
          <Board />
        </Canvas>
        <SideBar $wide>
          <ToolSet items={rightTools} row />
        </SideBar>
        <Panel>
          <PanelTitle>Appearance</PanelTitle>
          <Tabs>
            {['Layers', 'Objects', 'Nets'].map((name) => (
              <Tab key={name} type="button" $active={tab === name} onClick={() => setTab(name)}>
                {name}
              </Tab>
            ))}
          </Tabs>
          <LayerBox>
            <LayerList>
              {layers.map(([name, color, checker]) => (
                <LayerRow key={name} $current={name === 'Edge.Cuts'}>
                  <Marker $on={name === 'Edge.Cuts'} />
                  <Swatch $color={color} $checker={checker} />
                  <EyeButton type="button" aria-label={`Toggle ${name}`}>
                    <Eye />
                  </EyeButton>
                  <LayerName>{name}</LayerName>
                </LayerRow>
              ))}
            </LayerList>
            <Disclosure type="button">Layer Display Options</Disclosure>
          </LayerBox>
          <Field>
            <label htmlFor="presets">Presets (Ctrl+Tab):</label>
            <Dropdown id="presets" />
          </Field>
          <Field>
            <label htmlFor="viewports">Viewports (Option+Tab):</label>
            <Dropdown id="viewports" />
          </Field>
          <PanelTitle $spaced>Selection Filter</PanelTitle>
          <FilterGrid>
            {filters.map((name) => (
              <CheckLabel key={name}>
                <Check type="checkbox" defaultChecked={name !== 'Locked items'} />
                {name}
              </CheckLabel>
            ))}
          </FilterGrid>
        </Panel>
      </Body>
    </Window>
  );
};

export default App;
